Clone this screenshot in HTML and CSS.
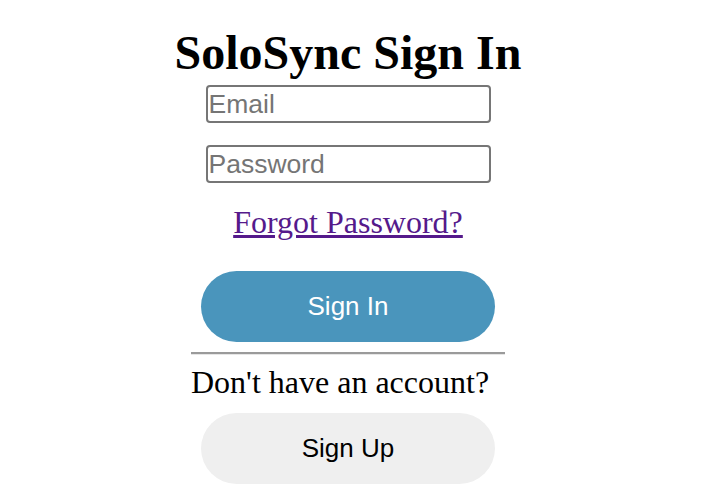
FILE: index.html
```html
<!DOCTYPE html>
<html>
<head>
<meta charset="utf-8">
<link rel="stylesheet" href="styles.css">
</head>
<body>
<main class="wrap">
  <h1 class="title">SoloSync Sign In</h1>
  <form class="form">
    <input class="field" type="email" placeholder="Email">
    <input class="field" type="password" placeholder="Password">
    <a class="forgot" href="#">Forgot Password?</a>
    <button class="btn btn-primary" type="button">Sign In</button>
  </form>
  <section class="signup">
    <hr class="rule">
    <p class="prompt">Don't have an account?</p>
    <button class="btn btn-secondary" type="button">Sign Up</button>
  </section>
</main>
</body>
</html>
```
FILE: styles.css
```css
html, body {
  margin: 0;
  padding: 0;
  background: #fff;
}
body {
  font-family: "Liberation Serif", "Times New Roman", serif;
  color: #000;
}
.wrap {
  display: flex;
  flex-direction: column;
  align-items: center;
  padding: 27px 10px 0 0;
}
.title {
  margin: 0;
  font-size: 48px;
  font-weight: bold;
  line-height: 52px;
}
.form {
  display: flex;
  flex-direction: column;
  align-items: center;
  margin-top: 6px;
}
.field {
  box-sizing: border-box;
  width: 285px;
  height: 38px;
  margin: 0 0 22px;
  padding: 0 1px;
  border: 2px solid #767676;
  border-radius: 4px;
  font-family: "Liberation Sans", Arial, sans-serif;
  font-size: 26.5px;
  color: #000;
}
.field:last-of-type {
  margin-bottom: 21px;
}
.field::placeholder {
  color: #757575;
}
.forgot {
  font-size: 32px;
  color: #551a8b;
  line-height: 36px;
}
.btn {
  box-sizing: border-box;
  width: 294px;
  height: 71px;
  border: none;
  border-radius: 36px;
  font-family: "Liberation Sans", Arial, sans-serif;
  font-size: 26px;
}
.btn-primary {
  margin-top: 31px;
  background: #4a95bc;
  color: #fff;
}
.signup {
  width: 314px;
  display: flex;
  flex-direction: column;
  align-items: center;
}
.rule {
  box-sizing: border-box;
  width: 100%;
  height: 3px;
  margin: 10px 0 0;
  border: none;
  border-top: 2px solid #9a9a9a;
  border-bottom: 1px solid #e6e6e6;
}
.prompt {
  align-self: stretch;
  margin: 9px 0 0;
  font-size: 32px;
  line-height: 36px;
  text-align: left;
}
.btn-secondary {
  margin-top: 13px;
  background: #efefef;
  color: #000;
}
```
